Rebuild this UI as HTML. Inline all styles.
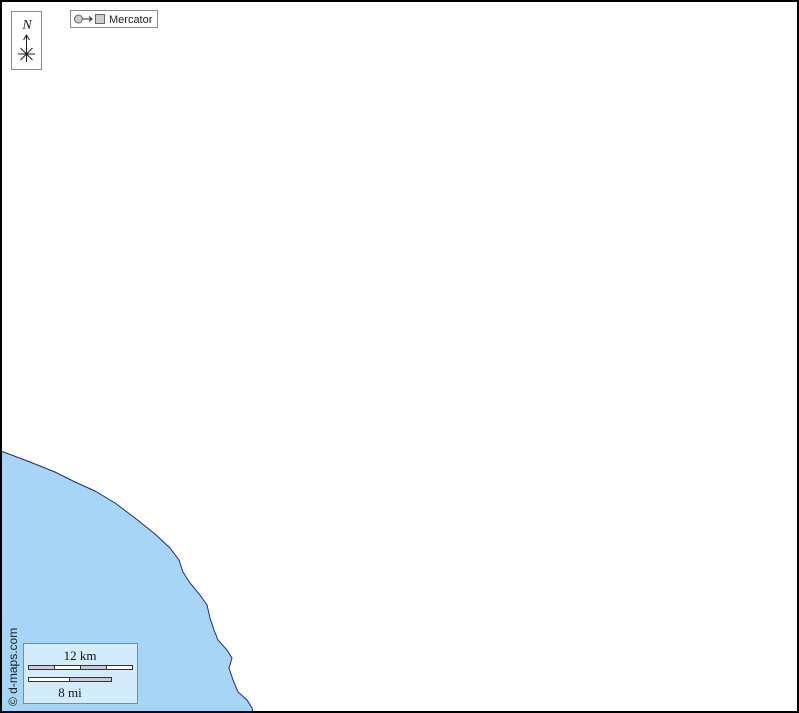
<!DOCTYPE html>
<html><head><style>
body{margin:0;width:799px;height:713px;overflow:hidden;background:#fff}
</style></head><body>
<svg width="799" height="713" viewBox="0 0 799 713" xmlns="http://www.w3.org/2000/svg" style="display:block">
<path d="M1,451 L30,462 L55,472 L75,482 L95,491 L115,503 L135,518 L155,534 L170,548 L179,560 L183,572 L190,583 L200,595 L207,605 L210,618 L214,630 L218,640 L227,650 L232,658 L229,668 L233,680 L238,692 L247,700 L252,708 L253,713 L1,713 Z" fill="#a6d5f6" stroke="#1a2a8a" stroke-width="1"/>
<rect x="1" y="1" width="797" height="711" fill="none" stroke="#000" stroke-width="2"/>
<rect x="11.5" y="11.5" width="30" height="58" fill="#fff" stroke="#888"/>
<text x="27" y="29" font-family="Liberation Serif" font-style="italic" font-size="14" text-anchor="middle" fill="#222">N</text>
<path d="M26.5,36 V62 M23.5,40 L26.5,35 L29.5,40 M18,54 H35 M20.5,48 L32.5,60 M32.5,48 L20.5,60" stroke="#222" stroke-width="1" fill="none"/>
<rect x="70.5" y="10.5" width="87" height="17" fill="#fff" stroke="#888"/>
<circle cx="78.5" cy="19" r="4" fill="#ccc" stroke="#666"/>
<path d="M83,19 H92 M89,16.5 L92,19 L89,21.5" stroke="#222" stroke-width="1" fill="none"/>
<rect x="95.5" y="14.5" width="9" height="9" fill="#ccc" stroke="#666"/>
<text x="109" y="23" font-family="Liberation Sans" font-size="11" fill="#222">Mercator</text>
<rect x="23.5" y="643.5" width="114" height="60" fill="#d2ecfc" stroke="#888"/>
<text x="80" y="660" font-family="Liberation Serif" font-size="13" text-anchor="middle" fill="#111">12 km</text>
<g stroke="#333" stroke-width="1">
<rect x="28.5" y="665.5" width="26" height="4" fill="#ccc"/>
<rect x="54.5" y="665.5" width="26" height="4" fill="#fff"/>
<rect x="80.5" y="665.5" width="26" height="4" fill="#ccc"/>
<rect x="106.5" y="665.5" width="26" height="4" fill="#fff"/>
<rect x="28.5" y="677.5" width="41" height="4" fill="#fff"/>
<rect x="69.5" y="677.5" width="42" height="4" fill="#ccc"/>
</g>
<text x="70" y="697" font-family="Liberation Serif" font-size="13" text-anchor="middle" fill="#111">8 mi</text>
<text transform="translate(17,706) rotate(-90)" font-family="Liberation Sans" font-size="12" fill="#222">© d-maps.com</text>
</svg>
</body></html>
